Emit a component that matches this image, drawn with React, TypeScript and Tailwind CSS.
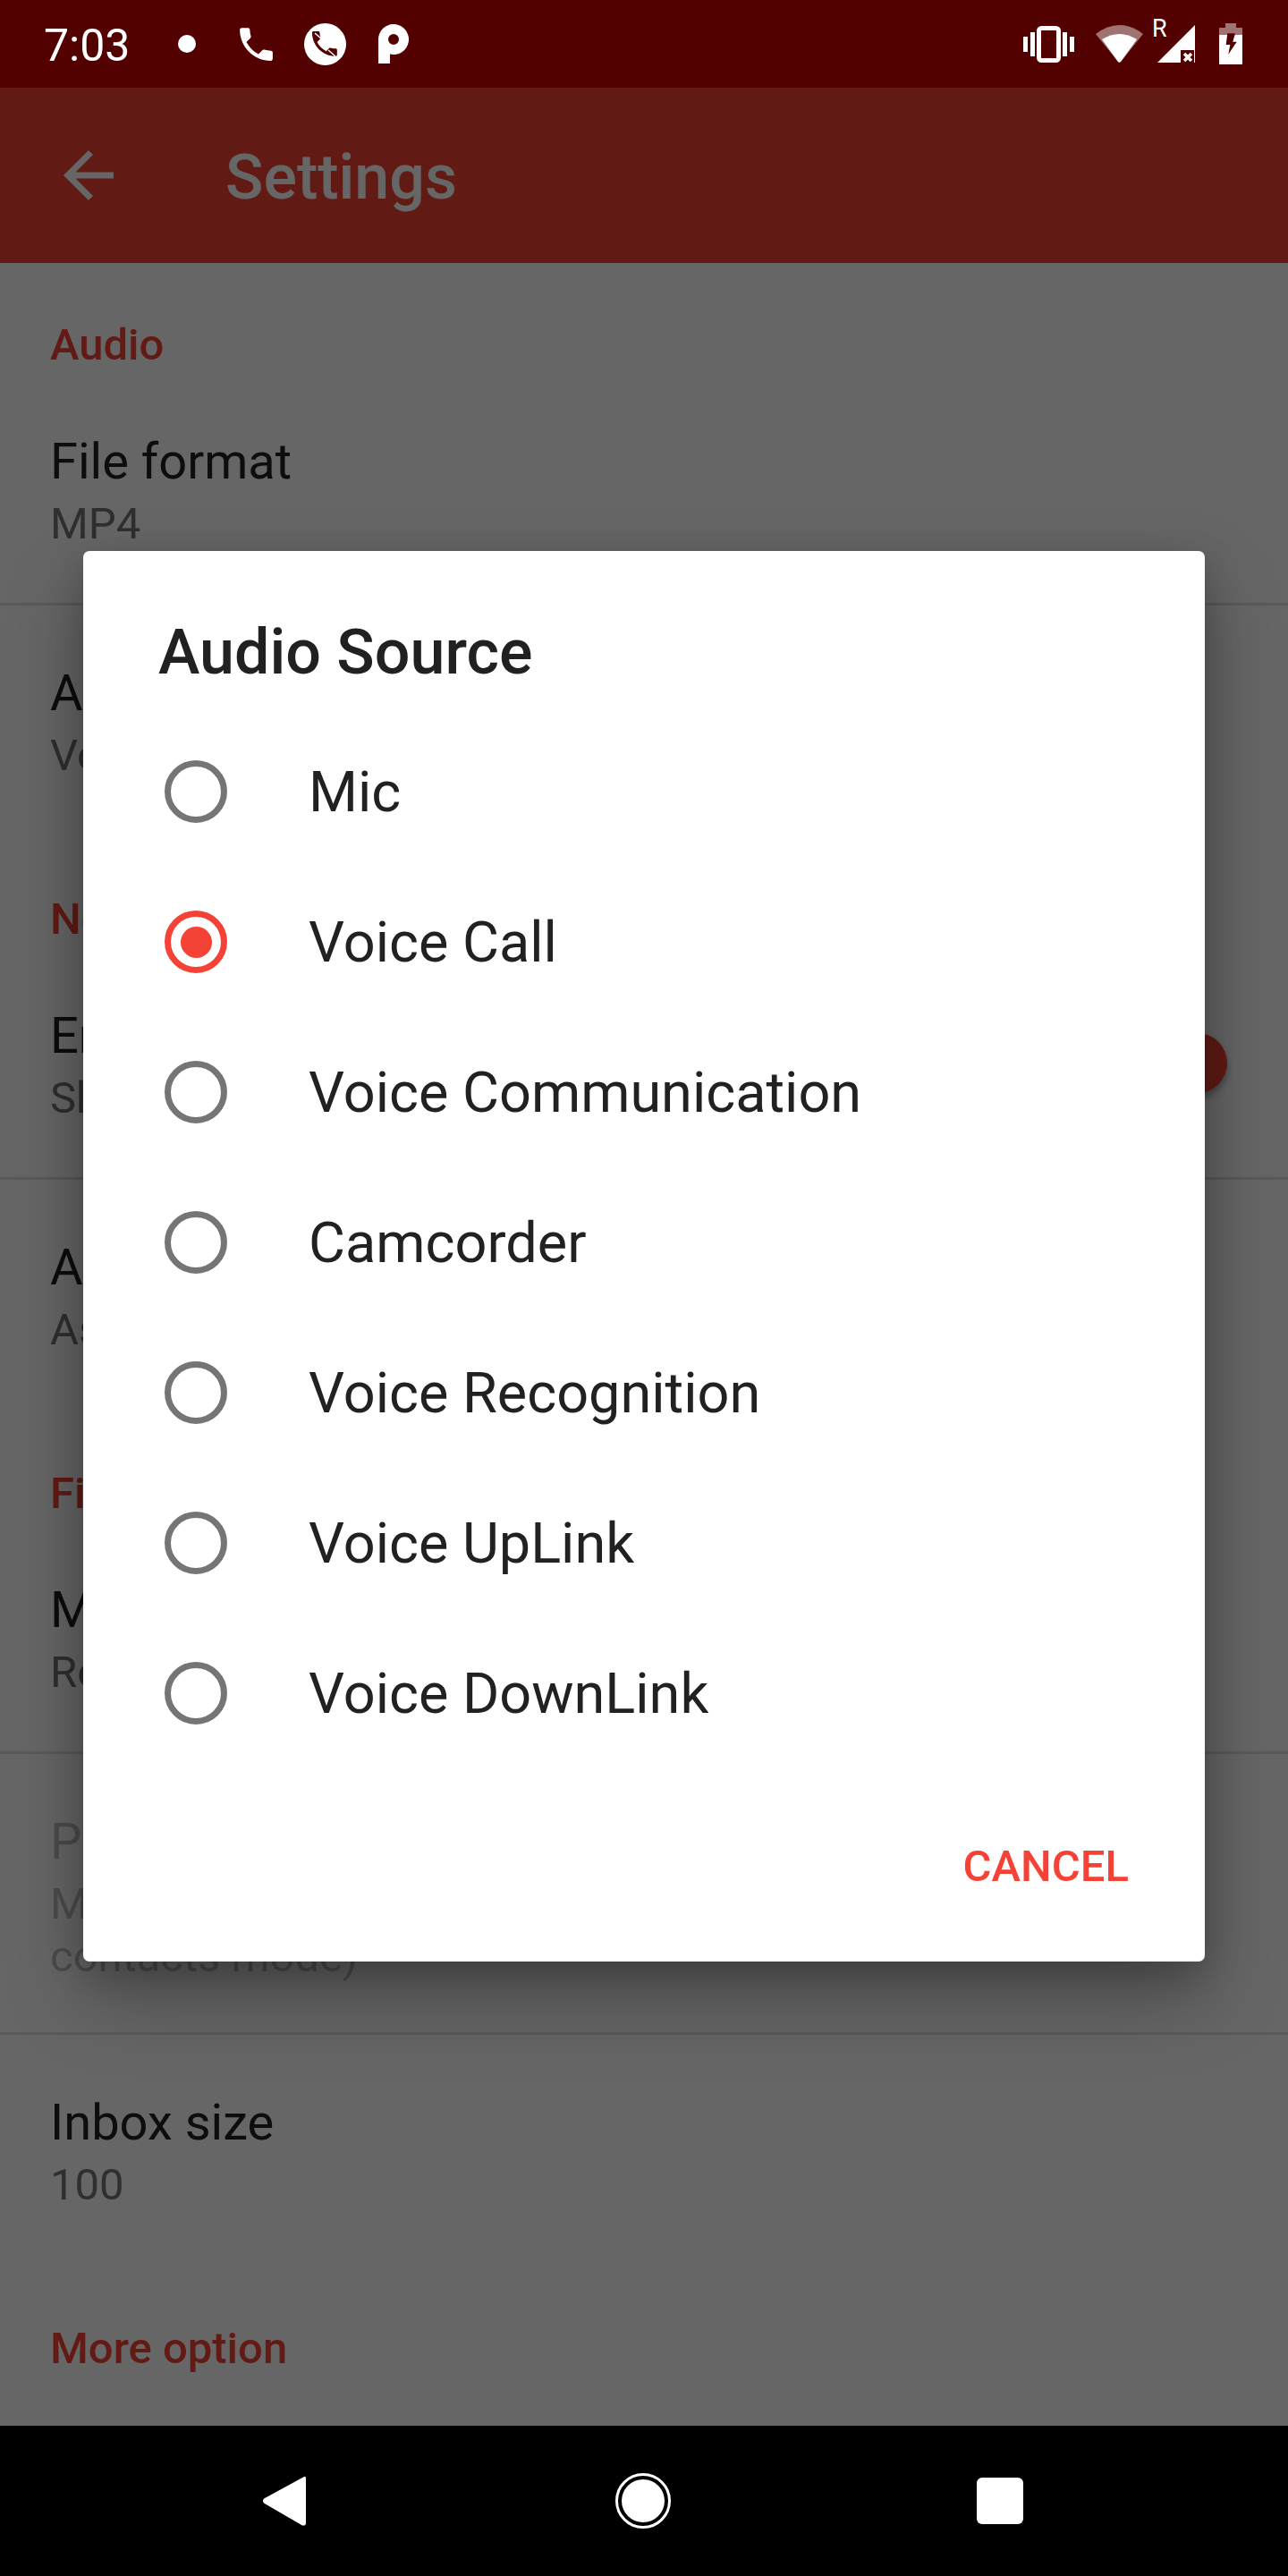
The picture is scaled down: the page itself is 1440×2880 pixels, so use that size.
const sources = ['Mic', 'Voice Call', 'Voice Communication', 'Camcorder', 'Voice Recognition', 'Voice UpLink', 'Voice DownLink']

const Heading = ({ children }: { children: string }) => (
  <div className="pt-[61px] pb-[1px] pl-14 text-[49px] leading-[62px] font-medium text-[#f44336]">{children}</div>
)

const Row = ({ title, summary, divider = true, disabled = false, children }: {
  title: string
  summary: string[]
  divider?: boolean
  disabled?: boolean
  children?: React.ReactNode
}) => (
  <div className={`flex items-center justify-between pl-14 border-b-[3px] ${divider ? 'border-[#e0e0e0]' : 'border-transparent'}`}>
    <div className={`pt-[61px] ${summary.length > 1 ? 'pb-[56px]' : 'pb-[58px]'}`}>
      <div className={`text-[56px] leading-[74px] mb-[3px] ${disabled ? 'text-[#bdbdbd]' : 'text-[#212121]'}`}>{title}</div>
      {summary.map((line, i) => (
        <div key={line} className={`text-[49px] ${i === 0 ? 'leading-[60px]' : 'leading-[57px]'} ${disabled ? 'text-[#bdbdbd]' : 'text-[#757575]'}`}>{line}</div>
      ))}
    </div>
    {children}
  </div>
)

const PhonePath = 'M6.62 10.79c1.44 2.83 3.76 5.14 6.59 6.59l2.2-2.2c.27-.27.67-.36 1.02-.24 1.12.37 2.33.57 3.57.57.55 0 1 .45 1 1V20c0 .55-.45 1-1 1-9.39 0-17-7.61-17-17 0-.55.45-1 1-1h3.5c.55 0 1 .45 1 1 0 1.25.2 2.45.57 3.57.11.35.03.74-.25 1.02l-2.2 2.2z'

const StatusBar = () => (
  <div className="h-[98px] bg-[#530000] flex items-center justify-between pl-[49px] pr-[51px] font-['Roboto']">
    <div className="flex items-center">
      <span className="w-[97px] pt-[3px] text-[50px] leading-[60px] text-white">7:03</span>
      {/* notification icons */}
      <span className="ml-[53px] w-5 h-5 rounded-full bg-white" />
      <svg className="ml-[43px]" width="49" height="49" viewBox="0 0 24 24" fill="#fff"><path d={PhonePath} /></svg>
      <svg className="ml-[29px]" width="47" height="47" viewBox="0 0 47 47">
        <circle cx="23.5" cy="23.5" r="23.5" fill="#fff" />
        <g transform="translate(4.3 4.3) scale(1.55)"><path d={PhonePath} fill="#530000" /></g>
        <path d="M12 11 L20 18 M27 30 L35 37" stroke="#fff" strokeWidth="1.5" />
      </svg>
      <svg className="ml-[36px]" width="34" height="44" viewBox="0 0 34 44">
        <path fillRule="evenodd" fill="#fff" d="M0 44V17a17 17 0 1 1 13 16.5V44zM17 11a6 6 0 1 0 0 12a6 6 0 0 0 0-12z" />
      </svg>
    </div>
    <div className="flex items-center">
      <svg width="57" height="41" viewBox="0 0 57 41" fill="#fff">
        <rect x="0" y="12" width="5" height="17" />
        <rect x="8" y="7" width="5" height="27" />
        <rect x="44" y="7" width="5" height="27" />
        <rect x="52" y="12" width="5" height="17" />
        <rect x="17.5" y="2.5" width="22" height="36" rx="3" fill="none" stroke="#fff" strokeWidth="5" />
      </svg>
      <svg className="ml-[24px]" width="53" height="42" viewBox="0 0 53 42">
        <path d="M0 10Q26.5-10 53 10L28 41Q26.5 42.500 25 41Z" fill="#fff" fillOpacity="0.45" />
        <path d="M7 16Q26.500 4 46 16L28 41Q26.500 42.500 25 41Z" fill="#fff" />
      </svg>
      <div className="relative ml-4 w-[42px] h-[42px]">
        <span className="absolute left-[-6px] top-[-9px] text-[27px] leading-[27px] text-white">R</span>
        <svg width="42" height="42" viewBox="0 0 42 42">
          <path d="M0 42L42 0V42Z" fill="#fff" />
          <rect x="26" y="28" width="15" height="14" fill="#530000" />
          <path d="M30 32L38 40M38 32L30 40" stroke="#fff" strokeWidth="3.500" />
        </svg>
      </div>
      <svg className="ml-[27px]" width="26" height="46" viewBox="0 0 26 46">
        <path d="M7 0H19V5H26V13H0V5H7Z" fill="#fff" fillOpacity="0.45" />
        <path d="M0 13H26V46H0Z" fill="#fff" />
        <path d="M9.300 11.300H18L15.300 20.700H19.700L10.300 34.700L12.300 24H7.700Z" fill="#530000" />
      </svg>
    </div>
  </div>
)

const Settings = () => (
  <div className="h-full overflow-hidden bg-white">
    <div className="h-[196px] bg-[#f44336] flex items-center pl-[57px]">
      <svg width="84" height="84" viewBox="0 0 24 24" fill="#fff"><path d="M20 11H7.830l5.590-5.590L12 4l-8 8 8 8 1.410-1.410L7.830 13H20v-2z" /></svg>
      <span className="ml-[111px] pt-[3px] text-[70px] leading-[84px] font-medium text-white">Settings</span>
    </div>
    <Heading>Audio</Heading>
    <Row title="File format" summary={['MP4']} />
    <Row title="Audio Source" summary={['Voice Call']} divider={false} />
    <Heading>Notification</Heading>
    <Row title="Enable notification" summary={['Show when recording']}>
      <div className="relative mr-[68px] w-[119px] h-[49px] rounded-full bg-[#fa9f98]">
        <div className="absolute right-0 top-[-9px] w-[67px] h-[67px] rounded-full bg-[#f44336] shadow-[0_5px_8px_rgba(0,0,0,0.35)]" />
      </div>
    </Row>
    <Row title="Auto save" summary={['Ask after each call']} divider={false} />
    <Heading>Files</Heading>
    <Row title="Mode" summary={['Record all calls']} />
    <Row title="Phone contacts" summary={['Manage the numbers to record (only in', 'contacts mode)']} disabled />
    <Row title="Inbox size" summary={['100']} divider={false} />
    <Heading>More option</Heading>
  </div>
)

const AudioSourceDialog = () => (
  <div className="w-[1254px] h-[1577px] mt-[518px] rounded-[7px] bg-white flex flex-col shadow-[0_40px_90px_rgba(0,0,0,0.28),0_14px_40px_rgba(0,0,0,0.2)]">
    <div className="h-[185px] pl-[84px] pt-[70px] text-[70px] leading-[86px] font-medium text-[#212121]">Audio Source</div>
    <div className="flex flex-col">
      {sources.map((source) => (
        <div key={source} className="h-[168px] flex items-center pl-[91px]">
          {source === 'Voice Call' ? (
            <span className="w-[70px] h-[70px] rounded-full border-[7px] border-[#f44336] flex items-center justify-center">
              <span className="w-[35px] h-[35px] rounded-full bg-[#f44336]" />
            </span>
          ) : (
            <span className="w-[70px] h-[70px] rounded-full border-[7px] border-[#757575]" />
          )}
          <span className="ml-[91px] pt-[2px] text-[63px] leading-[70px] text-[#212121]">{source}</span>
        </div>
      ))}
    </div>
    <div className="flex flex-1 items-center justify-end pr-[85px] pt-[3px]">
      <span className="text-[49px] leading-[60px] font-medium text-[#f44336]">CANCEL</span>
    </div>
  </div>
)

const NavBar = () => (
  <div className="h-[168px] bg-black flex items-center justify-between pl-[293px] pr-[296px]">
    <svg width="49" height="56" viewBox="0 0 49 56"><path d="M47 1L2 25.500Q0 28 2 30.500L45 55.500Q49 56 49 53V3Q49 0 47 1Z" fill="#fff" /></svg>
    <span className="ml-1 w-[62px] h-[62px] rounded-full border-[3px] border-white flex items-center justify-center">
      <span className="w-[48px] h-[48px] rounded-full bg-white" />
    </span>
    <span className="w-[52px] h-[52px] rounded-[6px] bg-white" />
  </div>
)

export default function App() {
  return (
    <div className="w-[1440px] h-[2880px] flex flex-col overflow-hidden bg-white font-['Roboto',sans-serif]">
      <StatusBar />
      <div className="relative flex-1 min-h-0">
        <Settings />
        {/* scrim and dialog over the settings list */}
        <div className="absolute inset-0 bg-black/60 flex justify-center items-start">
          <AudioSourceDialog />
        </div>
      </div>
      <NavBar />
    </div>
  )
}
